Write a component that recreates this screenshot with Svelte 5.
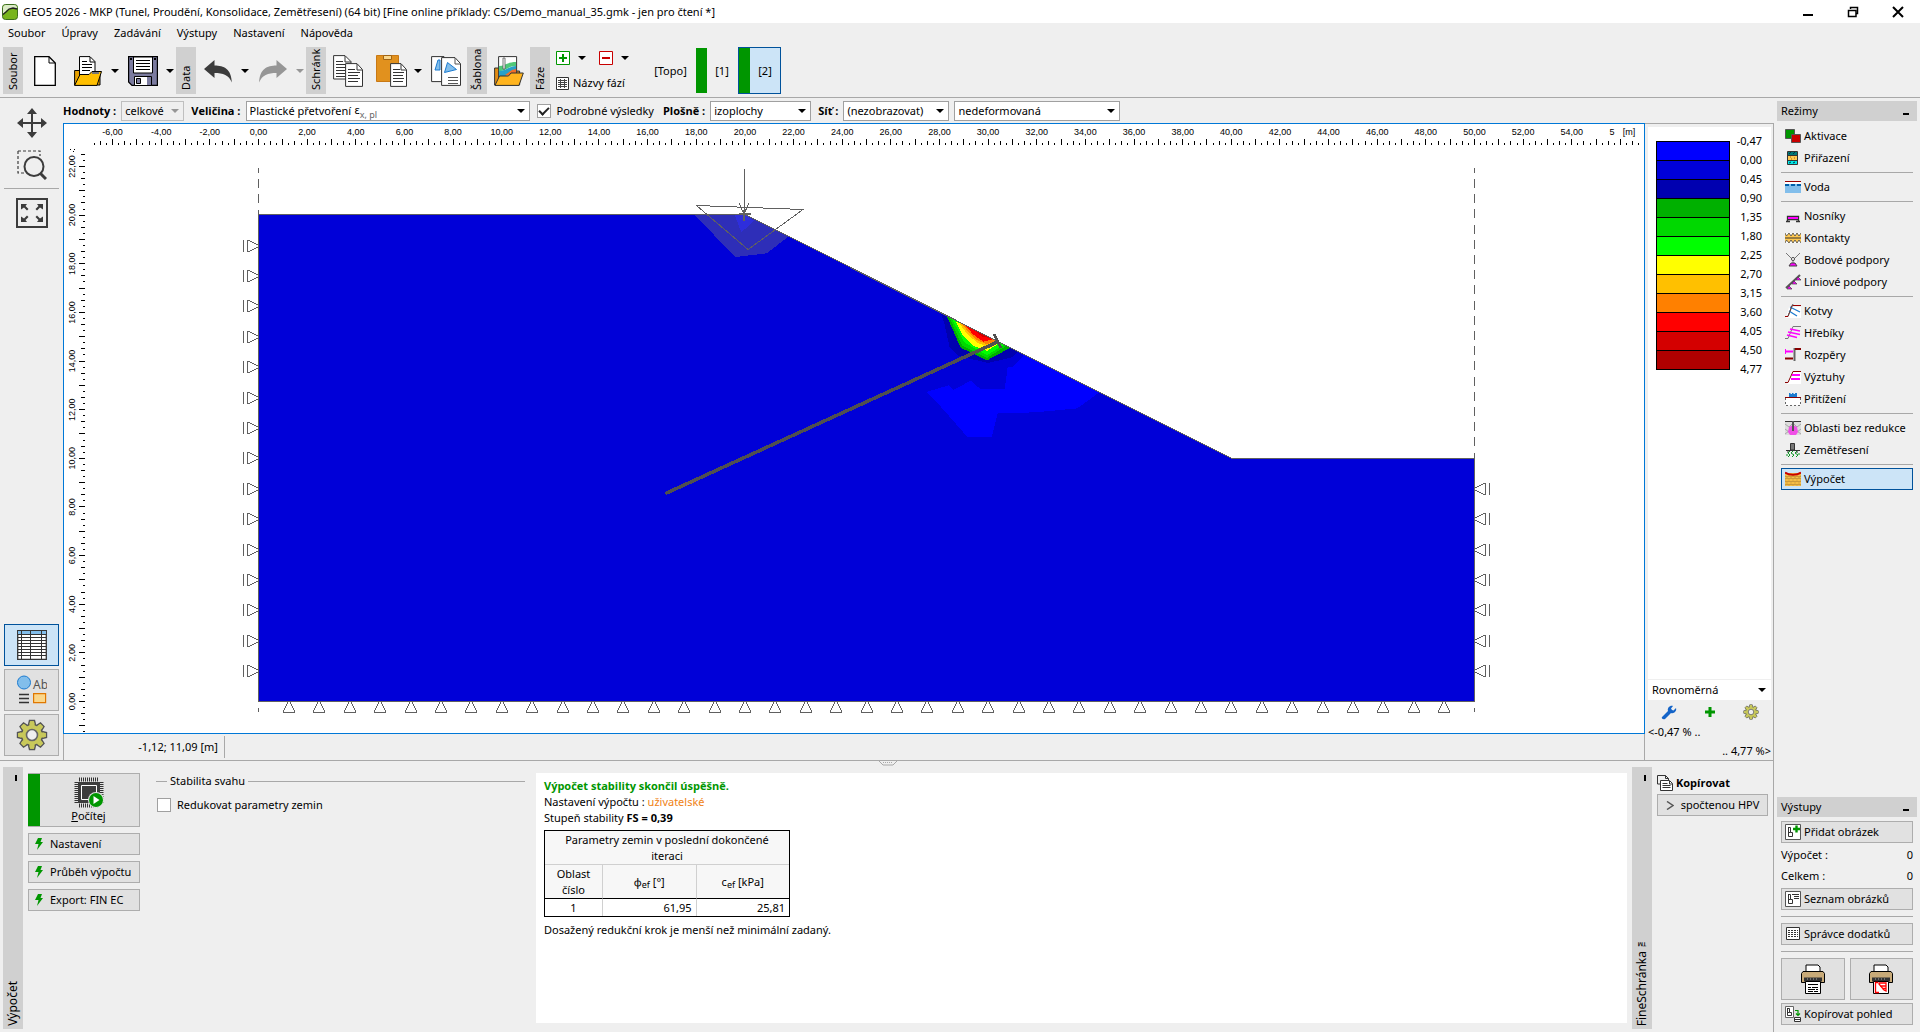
<script>
let detailed = $state(true);
let reduce = $state(false);
let activeMode = $state('Výpočet');
let activeStage = $state(2);

const menu = ['Soubor', 'Úpravy', 'Zadávání', 'Výstupy', 'Nastavení', 'Nápověda'];

const modes = [
     ['Aktivace', 'Přiřazení'],
     ['Voda'],
     ['Nosníky', 'Kontakty', 'Bodové podpory', 'Liniové podpory'],
     ['Kotvy', 'Hřebíky', 'Rozpěry', 'Výztuhy', 'Přitížení'],
     ['Oblasti bez redukce', 'Zemětřesení'],
     ['Výpočet']
];

const scale = ['#0000ff', '#0000d8', '#0000b0', '#00b000', '#00d800', '#00ff00', '#ffff00', '#ffc000', '#ff8000', '#ff0000', '#d40000', '#b00000'];
const levels = ['-0,47', '0,00', '0,45', '0,90', '1,35', '1,80', '2,25', '2,70', '3,15', '3,60', '4,05', '4,50', '4,77'];

// drawing area: metres to pixels
const PX = 24.32;
const toX = (m) => 258.5 + m * PX;
const toY = (m) => 701.5 - m * PX;

function range(from, to, step) {
     const out = [];
     for (let v = from; v <= to + 0.001; v += step) {
          out.push(v);
     }
     return out;
}
function tickLength(m) {
     if (Number.isInteger(m)) return 6;
     return Number.isInteger(m * 2) ? 4 : 2;
}
const format = (m) => m.toFixed(2).replace('.', ',');

const xTicks = range(-6.75, 56.75, 0.25);
const yTicks = range(-1.25, 22.5, 0.25);
const xLabels = range(-6, 54, 2);
const yLabels = range(0, 22, 2);
const supportsLeft = range(1.25, 18.75, 1.25);
const supportsRight = range(1.25, 8.75, 1.25);
const supportsBottom = range(1.25, 48.75, 1.25);
const teeth = [0, 45, 90, 135, 180, 225, 270, 315];
</script>

{#snippet gear(size)}
     <svg width={size} height={size} viewBox="0 0 32 32">
          {#each teeth as angle}
               <path d="M12 8L13.5 1.5h5L20 8" fill="#c8c85a" stroke="#555" stroke-width="1.4" transform="rotate({angle} 16 16)" />
          {/each}
          <circle cx="16" cy="16" r="10.5" fill="#c8c85a" stroke="#555" stroke-width="1.2" />
          {#each teeth as angle}
               <path d="M13 8L14.2 2.2h3.6L19 8z" fill="#c8c85a" transform="rotate({angle} 16 16)" />
          {/each}
          <circle cx="16" cy="16" r="5.5" fill="#efefef" stroke="#666" stroke-width="1.6" />
     </svg>
{/snippet}

{#snippet bolt()}
     <svg class="bolt" width="8" height="12" viewBox="0 0 8 12"><path d="M3 0h4L5.500 4H8L2 12 3.500 6H0z" fill="#009600" /></svg>
{/snippet}

{#snippet printer(red)}
     <svg width="26" height="30" viewBox="0 0 26 30">
          <path d="M6 7V1h12l2 2v4" fill="#fff" stroke="#000" />
          <path d="M3 7.500h20l1.500 2v9h-23v-9z" fill="#c8aa78" stroke="#000" />
          <path d="M4 13.500h18v4H4z" fill="#333" />
          <path d="M7 15h1m2 0h1m2 0h1m2 0h1" stroke="#aaa" />
          <path d="M5.500 17.500h15v12h-15z" fill="#fff" stroke="#000" />
          {#if red}
               <path d="M10 18.500H7.500v10H11M11 19h7v8l-2-1-5-6zM12 22h6m-4 2.500h4" fill="none" stroke="#f00" stroke-width="1.300" />
          {:else}
               <path d="M8 20.500h10M8 23.500h3m1 0h6M8 25.500h7m1 0h2M8 27.500h5m1 0h4" stroke="#000" />
          {/if}
     </svg>
{/snippet}

{#snippet picture(kind)}
     <svg width="16" height="16" viewBox="0 0 16 16">
          {#if kind === 'view'}
               <path d="M.5.500h8v11h-8z" fill="#fff" stroke="#666" />
               <path d="M2.500 2v7.500h4v-3h-2v-4h-2m0 4h2" fill="none" stroke="#333" />
               <path d="M10 4.500h3v5m-2-2 2 2 2-2" fill="none" stroke="#009600" stroke-width="1.200" />
               <path d="M9.500 11.500h6v4h-6zM9 13.500h7" fill="#fff" stroke="#333" />
          {:else if kind === 'table'}
               <path d="M1.500 1.500h13v12h-13z" fill="#fff" stroke="#333" />
               <path d="M3 4.500h10M3 6.500h10M3 8.500h10M3 10.500h10" stroke="#333" stroke-dasharray="2 1" />
          {:else}
               <path d="M.5.500h15v15H.5z" fill="#fff" stroke="#555" />
               <path d="M3.500 3v9.500h4v-4h-2v-5h-2m0 5h2" fill="none" stroke="#333" />
               {#if kind === 'add'}
                    <path d="M8 5h7M11.500 1.500v7" stroke="#009600" stroke-width="2.400" />
               {:else}
                    <path d="M7 3.500h7M9 5.500h5M9 7.500h5" stroke="#333" />
               {/if}
          {/if}
     </svg>
{/snippet}

{#snippet modeIcon(name)}
     <svg width="16" height="16" viewBox="0 0 16 16">
          {#if name === 'Aktivace'}
               <path d="M.5 1.500h9v9h-9z" fill="#009600" stroke="#555" />
               <path d="M6.500 6.500h9v8h-9z" fill="#c80000" stroke="#555" />
          {:else if name === 'Přiřazení'}
               <path d="M2.500 1.500h10v13h-10z" fill="#ffc850" stroke="#333" />
               <path d="M3 2h9v3H3z" fill="#007878" /><path d="M3 11h9v3H3z" fill="#00e6e6" />
               <path d="M3 5.500h9M3 10.500h9" stroke="#333" />
               <path d="M4 4l2-2m2 2 2-2M4 13l2-1m2 1 2-1" stroke="#034" /><path d="M5 7h1m3 1h1M6 9h1" stroke="#a60" />
          {:else if name === 'Voda'}
               <path d="M0 4h16v10H0z" fill="#82beeb" /><path d="M0 3h16v2H0z" fill="#fff" />
               <path d="M0 2.500h16" stroke="#960000" /><path d="M0 6h16" stroke="#005faa" stroke-width="2" stroke-dasharray="4 2" />
          {:else if name === 'Nosníky'}
               <path d="M1 13.500h4M11 13.500h4M2.500 13V8.500h11V13M3 11.500h10" stroke="#333" fill="none" stroke-width="1.300" />
               <path d="M3 9h10v2H3z" fill="#f0f" />
          {:else if name === 'Kontakty'}
               <path d="M0 3h16v10H0z" fill="#ffc850" />
               <path d="M0 3l1.500 3L4 3l2 3 2-3 2 3 2-3 2 3 2-3M0 13l1.500-3L4 13l2-3 2 3 2-3 2 3 2-3 2 3" fill="#fff" stroke="#444" stroke-width=".8" />
               <path d="M0 8h16" stroke="#333" />
          {:else if name === 'Bodové podpory'}
               <path d="M1 1l7 7 7-7M8 8v3" stroke="#777" fill="none" />
               <circle cx="8" cy="7" r="1.600" fill="#eee" stroke="#555" /><path d="M4 14l2-3h4l2 3z" fill="#f0f" stroke="#444" />
          {:else if name === 'Liniové podpory'}
               <path d="M1 14L15 1" stroke="#555" stroke-width="2" />
               <path d="M2 15l2-3 3 3zM7 10l2-3 3 3zM11 6l2-3 3 3z" fill="#f0f" stroke="#444" stroke-width=".7" />
          {:else if name === 'Kotvy'}
               <path d="M4 4h12v11H1z" fill="#fff" /><path d="M0 13.500h3L7 2.500h9" fill="none" stroke="#900" />
               <path d="M5 4l10 5M4 8l8 5" stroke="#1c7bd0" stroke-width="1.300" /><path d="M8 1L3 13" stroke="#555" />
          {:else if name === 'Hřebíky'}
               <path d="M0 13.500h3L8 1.500h8" fill="none" stroke="#777" />
               <path d="M5 4l10 2M3 7l12 2.500M2 10l10 2.500" stroke="#f0f" stroke-width="1.300" />
          {:else if name === 'Rozpěry'}
               <path d="M9.500 1v13" stroke="#666" stroke-width="2" /><path d="M10 2h6M0 11.500h8" stroke="#800" stroke-width="2" />
               <path d="M0 4.500h8" stroke="#f0f" stroke-width="2" /><path d="M.5 2v5" stroke="#f0f" />
          {:else if name === 'Výztuhy'}
               <path d="M7 3h9v12H2z" fill="#fff" /><path d="M0 13.500h3L8 2.500h8" fill="none" stroke="#800" />
               <path d="M7 6h8M6 10h9" stroke="#f0f" stroke-width="1.800" />
          {:else if name === 'Přitížení'}
               <path d="M4 6V2h1.500v1H7V2h1.500v1H10V2h2v4z" fill="#1c7bd0" /><path d="M0 6.500h16" stroke="#800" />
               <path d="M.5 7v7.500h15V7" fill="#fff" stroke="#666" stroke-dasharray="2 2" />
          {:else if name === 'Oblasti bez redukce'}
               <path d="M0 1h16v14H0z" fill="#ddd" /><path d="M0 4l4 3 4-4 4 4 4-3M0 9l4 3 4-3 4 3 4-3M0 14l4-3 4 3 4-3 4 3" fill="none" stroke="#999" stroke-width=".8" />
               <path d="M8 5l4 2 1 5-2 3H5l-2-3 1-5z" fill="#f050e6" /><path d="M0 1.500h16" stroke="#333" /><path d="M8 1v10" stroke="#555" stroke-width="2" />
          {:else if name === 'Zemětřesení'}
               <path d="M5.500 1.500h4V8h-4z" fill="#777" stroke="#333" /><path d="M1 8.500h14M3 8v3m9-3v3" stroke="#333" />
               <path d="M5 9l-2 2 2 2-2 2M8 9l-2 2 3 2-2 2M12 9l-2 2 3 2-2 2M1 13h2m10-1h2" fill="none" stroke="#0a9623" />
          {:else}
               <path d="M0 2h16v13H0z" fill="#f5be46" />
               <path d="M0 5l2 1 2-1 2 1 2-1 2 1 2-1 2 1 2-1M0 8l2-1 2 1 2-1 2 1 2-1 2 1 2-1 2 1M0 10l2 1 2-1 2 1 2-1 2 1 2-1 2 1 2-1M0 14l2-1 2 1 2-1 2 1 2-1 2 1 2-1 2 1" fill="none" stroke="#b08232" stroke-width=".8" />
               <path d="M0 1.500c4 3 12 3 16 0" fill="none" stroke="#c80000" stroke-width="2" />
          {/if}
     </svg>
{/snippet}

<div class="app">
     <header class="titlebar">
          <svg width="16" height="16" viewBox="0 0 16 16">
               <rect x=".5" y=".5" width="15" height="15" rx="3" fill="#78b41e" stroke="#3c6e1e" />
               <path d="M1 10l4-4 3-1 3-1 4 1V4c0-2-1-3-3-3H4C2 1 1 2 1 4z" fill="#dcebc8" />
               <path d="M1 10.500L4 8l3-3 4-1 4 1" fill="none" stroke="#222" stroke-width="1.300" />
          </svg>
          <h1>GEO5 2026 - MKP (Tunel, Proudění, Konsolidace, Zemětřesení) (64 bit) [Fine online příklady: CS/Demo_manual_35.gmk - jen pro čtení *]</h1>
          <div class="window-buttons">
               <button aria-label="Minimalizovat"><svg width="12" height="12" viewBox="0 0 12 12"><path d="M1 9h10" stroke="#000" stroke-width="2" /></svg></button>
               <button aria-label="Obnovit"><svg width="12" height="12" viewBox="0 0 12 12"><path d="M3.500 3V1.500h7v6H9" fill="none" stroke="#000" stroke-width="1.500" /><path d="M1.500 4.500H9v6H1.500z" fill="#fff" stroke="#000" stroke-width="1.500" /></svg></button>
               <button aria-label="Zavřít"><svg width="12" height="12" viewBox="0 0 12 12"><path d="M1 1l10 10M11 1L1 11" stroke="#000" stroke-width="2" /></svg></button>
          </div>
     </header>

     <nav class="menu">
          {#each menu as entry}
               <button>{entry}</button>
          {/each}
     </nav>

     <div class="toolbar">
          <span class="strip">Soubor</span>
          <button class="tool" aria-label="Nový">
               <svg width="22" height="30" viewBox="0 0 22 30"><path d="M.7.700H15L21.300 7v22.300H.7z" fill="#fff" stroke="#000" stroke-width="1.300" /><path d="M15 1v6h6" fill="none" stroke="#000" /></svg>
          </button>
          <button class="tool" aria-label="Otevřít">
               <svg width="28" height="30" viewBox="0 0 28 30">
                    <path d="M.6 29V14.500h5l3 3H26V29z" fill="#e6a000" stroke="#000" />
                    <path d="M5.500 22V.600H16l5 5V22z" fill="#fff" stroke="#000" /><path d="M16 1v5h5M8 5.500h5M8 8.500h10M8 11.500h10M8 14.500h8" fill="none" stroke="#000" />
                    <path d="M.6 29.400L6 18.500h9l3-3h9.500L23 29.400z" fill="#ffbf00" stroke="#000" /><path d="M18 17h7" stroke="#777" stroke-width="2" />
               </svg>
          </button>
          <button class="drop" aria-label="Otevřít – další"></button>
          <button class="tool" aria-label="Uložit">
               <svg width="30" height="30" viewBox="0 0 30 30">
                    <path d="M.6.600h28.800v28.800H4L.6 26z" fill="#7b7b9f" stroke="#000" stroke-width="1.200" />
                    <path d="M5.500 1h19v16h-19z" fill="#fff" stroke="#000" /><path d="M8 4.500h14M8 7.500h14M8 10.500h14M8 13.500h14" stroke="#000" />
                    <path d="M6.500 20.500h17v9h-17z" fill="#fff" stroke="#000" /><path d="M8.500 22.500h4v5h-4z" fill="#7b7b9f" stroke="#000" /><path d="M19 21h4v8h-4z" fill="#7b7b9f" />
                    <path d="M2 3h2m22 0h2" stroke="#000" stroke-width="2" />
               </svg>
          </button>
          <button class="drop" aria-label="Uložit – další"></button>

          <span class="strip">Data</span>
          <button class="tool" aria-label="Zpět"><svg width="28" height="26" viewBox="0 0 28 26"><path d="M0 11L10.500 2v5.500C20 7.500 27.500 11 27.800 24.500 25 17 19 15 10.500 15v5z" fill="#3c3c3c" /></svg></button>
          <button class="drop" aria-label="Zpět – další"></button>
          <button class="tool" aria-label="Znovu"><svg width="28" height="26" viewBox="0 0 28 26"><path d="M28 11L17.500 2v5.500C8 7.500.5 11 .2 24.500 3 17 9 15 17.500 15v5z" fill="#969696" /></svg></button>
          <button class="drop dim" aria-label="Znovu – další"></button>

          <span class="strip">Schránk</span>
          <button class="tool" aria-label="Kopírovat">
               <svg width="30" height="32" viewBox="0 0 30 32">
                    <path d="M.6.600H12l6 6V24H.6z" fill="#fff" stroke="#333" /><path d="M12 1v6h6M3 6.500h7M3 9.500h12M3 12.500h11M3 15.500h9M3 18.500h9M3 21.500h9" fill="none" stroke="#333" />
                    <path d="M12.600 8.600H24l5.500 6v16.800H12.600z" fill="#fff" stroke="#333" /><path d="M24 9v6h5M15 14.500h7M15 17.500h12M15 20.500h10M15 23.500h12M15 26.500h10" fill="none" stroke="#333" />
               </svg>
          </button>
          <button class="tool" aria-label="Vložit">
               <svg width="31" height="32" viewBox="0 0 31 32">
                    <path d="M.5.500h22v26H.5z" fill="#e1911e" stroke="#c87814" /><path d="M7.500.500h8v4h-8z" fill="#fad78c" stroke="#a06414" />
                    <path d="M14.600 8.600H25l5.500 6v16.800H14.600z" fill="#fff" stroke="#333" /><path d="M25 9v6h5M17 14.500h7M17 17.500h11M17 20.500h10M17 23.500h11M17 26.500h10" fill="none" stroke="#333" />
               </svg>
          </button>
          <button class="drop" aria-label="Vložit – další"></button>
          <button class="tool" aria-label="Kopírovat obrázek">
               <svg width="30" height="30" viewBox="0 0 30 30">
                    <path d="M.6.600H13v25H.6z" fill="#fff" stroke="#333" /><path d="M4 14l3-10h2v10z" fill="#82beeb" stroke="#1c7bd0" />
                    <path d="M10.600 1.600H24l5.500 6v21.800H10.600z" fill="#fff" stroke="#333" /><path d="M24 2v6h5M17 21.500h10M17 24.500h10M17 27.500h10" fill="none" stroke="#555" />
                    <path d="M13.500 16.500l3-10 9 7z" fill="#82beeb" stroke="#1c7bd0" />
               </svg>
          </button>

          <span class="strip">Šablona</span>
          <button class="tool" aria-label="Šablona">
               <svg width="30" height="30" viewBox="0 0 30 30">
                    <path d="M.6 29V12h4l2 3h19v14z" fill="#e18c14" stroke="#333" />
                    <path d="M4.600.600h18v22h-18z" fill="#fff" stroke="#333" />
                    <path d="M5 10c6 0 8-4 17-4v4c-8 0-10 5-17 5z" fill="#50c878" /><path d="M5 15c7 0 10-5 17-5v7L5 22z" fill="#28a0c8" /><path d="M11 19l7-5 4-1v8z" fill="#f06e28" />
                    <path d="M9 2h2v11H9z" fill="#fff" stroke="#555" stroke-width=".8" />
                    <path d="M1 29.400L5.500 20h9l2.500-3h12.300L25 29.400z" fill="#ffb41e" stroke="#333" />
               </svg>
          </button>

          <span class="strip">Fáze</span>
          <div class="stages-edit">
               <div class="row">
                    <button class="mini" aria-label="Přidat fázi"><svg width="14" height="14" viewBox="0 0 14 14"><path d="M.5.500h13v13H.5z" fill="#fff" stroke="#009600" /><path d="M3 7h8M7 3v8" stroke="#009600" stroke-width="2" /></svg></button>
                    <button class="drop" aria-label="Přidat fázi – další"></button>
                    <button class="mini" aria-label="Odebrat fázi"><svg width="14" height="14" viewBox="0 0 14 14"><path d="M.5.500h13v13H.5z" fill="#fff" stroke="#c80000" /><path d="M3 7h8" stroke="#c80000" stroke-width="2" /></svg></button>
                    <button class="drop" aria-label="Odebrat fázi – další"></button>
               </div>
               <button class="names">
                    <svg width="13" height="13" viewBox="0 0 13 13"><path d="M.5.500h12v12H.5z" fill="#fff" stroke="#333" /><path d="M2 3.500h9M2 5.500h9M2 7.500h9M2 9.500h9M4.500 2v9M8.500 2v9" stroke="#444" /></svg>
                    Názvy fází
               </button>
          </div>
          <button class="stage topo" onclick={() => activeStage = 0}>[Topo]</button>
          <button class="stage done" class:active={activeStage == 1} onclick={() => activeStage = 1}>[1]</button>
          <button class="stage done" class:active={activeStage == 2} onclick={() => activeStage = 2}>[2]</button>
     </div>

     <div class="workspace">
          <div class="left-area">
               <div class="upper">
                    <aside class="viewtools">
                         <button aria-label="Posun"><svg width="30" height="30" viewBox="0 0 30 30"><path d="M4 15h22M15 4v22" stroke="#3c3c3c" stroke-width="2" /><path d="M15 0l5 6H10zM15 30l5-6H10zM0 15l6-5v10zM30 15l-6-5v10z" fill="#3c3c3c" /></svg></button>
                         <button aria-label="Lupa"><svg width="30" height="30" viewBox="0 0 30 30"><path d="M1 1h22v5M1 1v22h6" fill="none" stroke="#3c3c3c" stroke-dasharray="3 2" stroke-width="1.200" /><circle cx="17" cy="16.500" r="9.500" fill="none" stroke="#3c3c3c" stroke-width="2" /><path d="M23 23l6 6" stroke="#3c3c3c" stroke-width="3" /></svg></button>
                         <hr>
                         <button aria-label="Zobrazit vše"><svg width="32" height="30" viewBox="0 0 32 30"><path d="M1 1h30v28H1z" fill="none" stroke="#3c3c3c" stroke-width="2" /><path d="M5 6h6L9.500 8l3 3L11 12.500l-3-3-3 2zM27 6h-6l1.500 2-3 3 1.500 1.500 3-3 3 2zM5 24h6l-1.500-2 3-3-1.500-1.500-3 3-3-2zM27 24h-6l1.500-2-3-3 1.500-1.500 3 3 3-2z" fill="#3c3c3c" /></svg></button>
                         <div class="panel-switch">
                              <button class="box active" aria-label="Tabulky">
                                   <svg width="30" height="30" viewBox="0 0 30 30"><path d="M.7.700h28.600v28.600H.7z" fill="#fff" stroke="#333" stroke-width="1.300" /><path d="M1 1h28v3H1z" fill="#82beeb" /><path d="M1 4.500h28M1 7.500h28M1 10.500h28M1 13.500h28M1 16.500h28M1 19.500h28M1 22.500h28M1 25.500h28M4.500 1v28M13.500 1v28M24.500 1v28" stroke="#333" /></svg>
                              </button>
                              <button class="box" aria-label="Popisy">
                                   <svg width="30" height="30" viewBox="0 0 30 30"><circle cx="7" cy="7.500" r="6.500" fill="#82beeb" stroke="#1c7bd0" /><text class="ab" x="16" y="14">Ab</text><path d="M2 19.500h10M2 23.500h10M2 27.500h10" stroke="#333" stroke-width="1.600" /><path d="M16.600 18.600h12v9h-12z" fill="#fad78c" stroke="#e17800" stroke-width="1.200" /></svg>
                              </button>
                              <button class="box" aria-label="Nastavení kreslení">{@render gear(32)}</button>
                         </div>
                    </aside>

                    <main>
                         <div class="filters">
                              <label for="values">Hodnoty :</label>
                              <span class="combo values"><select id="values" disabled><option>celkové</option></select></span>
                              <label for="quantity">Veličina :</label>
                              <span class="combo quantity">
                                   <select id="quantity"><option>Plastické přetvoření</option></select>
                                   <span class="formula"><span>ε</span><sub>x, pl</sub></span>
                              </span>
                              <label class="check"><input type="checkbox" bind:checked={detailed}>Podrobné výsledky</label>
                              <label for="area">Plošně :</label>
                              <span class="combo area"><select id="area"><option>izoplochy</option></select></span>
                              <label for="mesh">Síť :</label>
                              <span class="combo mesh"><select id="mesh"><option>(nezobrazovat)</option></select></span>
                              <span class="combo shape"><select aria-label="Tvar sítě"><option>nedeformovaná</option></select></span>
                         </div>

                         <div class="view">
                              <div class="plot">
                                   <div class="canvas">
                                        <svg viewBox="64 124 1580 609" shape-rendering="crispEdges">
                                             <g stroke="#000">
                                                  {#each xTicks as m}
                                                       <line x1={toX(m)} x2={toX(m)} y1={145 - tickLength(m)} y2="145" />
                                                  {/each}
                                                  {#each yTicks as m}
                                                       <line x1={85 - tickLength(m)} x2="85" y1={toY(m)} y2={toY(m)} />
                                                  {/each}
                                             </g>
                                             <g class="ruler">
                                                  {#each xLabels as m}
                                                       <text x={toX(m)} y="135">{format(m)}</text>
                                                  {/each}
                                                  <text x="1612" y="135">5</text>
                                                  <text x="1629" y="135">[m]</text>
                                                  {#each yLabels as m}
                                                       <text transform="translate(75 {toY(m)}) rotate(-90)">{format(m)}</text>
                                                  {/each}
                                             </g>
                                             <path d="M70 149.500h1M74 149.500h1M73 151h1" stroke="#000" />

                                             <!-- soil body -->
                                             <polygon points="258.5,214.5 744.9,214.5 1231.3,458.3 1474.5,458.3 1474.5,701.5 258.5,701.5" fill="#0000d8" />

                                             <!-- isosurfaces, in thirds of a pixel -->
                                             <g transform="translate(640 160) scale(.33333)">
                                                  <polygon points="162,164 314,164 445,230 380,280 287,291" fill="#2e2eb8" />
                                                  <polygon points="284,164 314,164 343,182 304,217" fill="#2e2edc" />
                                                  <polygon points="903,462 913,490 929,562 955,588 1045,609 1115,592 1135,574" fill="#0000b0" />
                                                  <polygon points="1152,585 1118,620 1103,622 1094,687 1020,686 992,662 940,690 925,676 860,696 905,743 982,831 1055,831 1073,760 1145,759 1220,754 1312,745 1377,698" fill="#0000ff" />
                                                  <polygon points="920,468 962,563 1041,601 1112,563" fill="#00b000" />
                                                  <polygon points="928,472 966,556 1041,594 1098,558" fill="#00d800" />
                                                  <polygon points="936,477 974,548 1041,586 1092,554" fill="#00ff00" />
                                                  <polygon points="946,483 968,525 1000,557 1041,573 1080,548" fill="#ffff00" />
                                                  <polygon points="957,488 980,520 1010,547 1041,560 1075,546" fill="#ffc000" />
                                                  <polygon points="967,493 987,518 1012,541 1040,552 1072,545" fill="#ff8000" />
                                                  <polygon points="976,497 1000,524 1030,545 1058,538" fill="#ff0000" />
                                                  <polygon points="998,508 1027,530 1050,534" fill="#d40000" />
                                             </g>

                                             <polyline points="258.5,701.5 258.5,214.5 744.9,214.5 1231.3,458.3 1474.5,458.3 1474.5,701.5 258.5,701.5" class="line" />
                                             <g class="line">
                                                  <path d="M258.500 168v5M258.500 179v9M258.500 194v9M258.500 210v5M258.500 708v4M1474.500 708v4" />
                                                  <path d="M1474.500 168v5" />
                                                  <path d="M1474.500 179V458" stroke-dasharray="9 6.200" />
                                                  {#each supportsLeft as m}
                                                       <path transform="translate(258 {Math.round(toY(m))})" d="M-14.500-6V6M-10.500-6V6M-10-6L0-1M-10 6L0 1" />
                                                  {/each}
                                                  {#each supportsRight as m}
                                                       <path transform="translate(1475 {Math.round(toY(m))})" d="M14.500-6V6M10.500-6V6M10-6L0-1M10 6L0 1" />
                                                  {/each}
                                                  {#each supportsBottom as m}
                                                       <path transform="translate({Math.round(toX(m))} 702)" d="M-6 10.500H6M-6 10L-1 0M6 10L1 0" />
                                                  {/each}
                                                  <path d="M744.500 169V214M739 203l5 11 5-11M696.500 205.500L803 209.500 748 249.500z" />
                                                  <path d="M744 210v11M739 214h12" stroke-width="2" />
                                             </g>
                                             <path d="M665.500 493.500L997.500 342" stroke="#505050" stroke-width="3.500" />
                                             <path d="M994 334l7 14" stroke="#505050" stroke-width="3" />
                                        </svg>
                                   </div>
                                   <div class="status"><span>-1,12; 11,09 [m]</span></div>
                              </div>

                              <div class="legend">
                                   <div class="scale">
                                        <div class="bars">
                                             {#each scale as color}
                                                  <i style:background={color}></i>
                                             {/each}
                                        </div>
                                        <div class="levels">
                                             {#each levels as level}
                                                  <span>{level}</span>
                                             {/each}
                                        </div>
                                   </div>
                                   <span class="combo flat"><select aria-label="Stupnice"><option>Rovnoměrná</option></select></span>
                                   <div class="legend-tools">
                                        <button aria-label="Upravit"><svg width="16" height="16" viewBox="0 0 16 16"><path d="M1 13l6-6c-1-3 2-6 5-5L10 4.500l1 1.500 1.500.500L15 4c1 3-2 6-5 5l-6 6c-2 1-4-1-3-2z" fill="#1464c8" /></svg></button>
                                        <button aria-label="Přidat"><svg width="16" height="16" viewBox="0 0 16 16"><path d="M3 8h10M8 3v10" stroke="#009600" stroke-width="3" /></svg></button>
                                        <button aria-label="Nastavení stupnice">{@render gear(16)}</button>
                                   </div>
                                   <div class="limits"><span>&lt;-0,47 % ..</span><span class="max">.. 4,77 %&gt;</span></div>
                              </div>
                         </div>
                    </main>
               </div>

               <div class="lower">
                    <svg class="grip" width="18" height="5" viewBox="0 0 18 5"><path d="M0 0l4 4h10l4-4" fill="#efefef" stroke="#a8a8a8" /><path d="M4 1.500h10" stroke="#a8a8a8" stroke-dasharray="1 1" /></svg>
                    <div class="side-strip"><button aria-label="Sbalit"></button><span>Výpočet</span></div>
                    <div class="actions">
                         <button class="box run">
                              <span class="run-body">
                                   <svg width="30" height="31" viewBox="0 0 30 31">
                                        <path d="M5 2.500h20M5 28.500h20" stroke="#333" stroke-width="4" stroke-dasharray="1 1" /><path d="M2.500 5v21M27.500 5v21" stroke="#333" stroke-width="4" stroke-dasharray="1 1" />
                                        <path d="M4 5h22v21H4z" fill="#3c3c3c" /><path d="M7.500 8.500h15v14h-15z" fill="none" stroke="#fff" />
                                        <circle cx="22" cy="23" r="8" fill="#e1e1e1" /><circle cx="22" cy="23" r="7" fill="#009600" /><path d="M19.500 19v8l6-4z" fill="#fff" />
                                   </svg>
                                   <span><u>P</u>očítej</span>
                              </span>
                         </button>
                         <button class="box quick">{@render bolt()}Nastavení</button>
                         <button class="box quick">{@render bolt()}Průběh výpočtu</button>
                         <button class="box quick">{@render bolt()}Export: FIN EC</button>
                    </div>
                    <fieldset>
                         <legend>Stabilita svahu</legend>
                         <label class="check"><input type="checkbox" bind:checked={reduce}>Redukovat parametry zemin</label>
                    </fieldset>
                    <section class="results">
                         <p><b class="ok">Výpočet stability skončil úspěšně.</b></p>
                         <p>Nastavení výpočtu : <span class="custom">uživatelské</span></p>
                         <p>Stupeň stability <b>FS = 0,39</b></p>
                         <table>
                              <colgroup><col class="number"><col><col></colgroup>
                              <thead>
                                   <tr><th colspan="3">Parametry zemin v poslední dokončené iteraci</th></tr>
                                   <tr><th>Oblast číslo</th><th>φ<sub>ef</sub> [°]</th><th>c<sub>ef</sub> [kPa]</th></tr>
                              </thead>
                              <tbody>
                                   <tr><td class="first">1</td><td>61,95</td><td>25,81</td></tr>
                              </tbody>
                         </table>
                         <p>Dosažený redukční krok je menší než minimální zadaný.</p>
                    </section>
                    <div class="side-strip"><button aria-label="Sbalit"></button><span>FineSchránka™</span></div>
                    <div class="clipboard">
                         <h2><svg width="16" height="16" viewBox="0 0 16 16"><path d="M.5 9V.500h8l3 3V5M8.500.500v3h3M.5 9H3" fill="none" stroke="#333" /><path d="M3.500 5.500h9l3 3v7h-12z" fill="#fff" stroke="#333" /><path d="M12.500 6v3h3M5.500 8.500h5M5.500 10.500h8M5.500 12.500h8" fill="none" stroke="#333" /></svg>Kopírovat</h2>
                         <button class="box"><svg width="8" height="9" viewBox="0 0 8 9"><path d="M1 .500l6 4-6 4" fill="none" stroke="#555" stroke-width="1.500" /></svg>spočtenou HPV</button>
                    </div>
               </div>
          </div>

          <aside class="sidebar">
               <h2>Režimy<button aria-label="Sbalit Režimy"></button></h2>
               <div class="modes">
                    {#each modes as group, index}
                         {#if index > 0}<hr>{/if}
                         {#each group as mode}
                              <button class="mode" class:active={activeMode == mode} onclick={() => activeMode = mode}>{@render modeIcon(mode)}{mode}</button>
                         {/each}
                    {/each}
               </div>
               <h2>Výstupy<button aria-label="Sbalit Výstupy"></button></h2>
               <div class="outputs">
                    <button class="box">{@render picture('add')}Přidat obrázek</button>
                    <div class="count"><span>Výpočet :</span><span>0</span></div>
                    <div class="count"><span>Celkem :</span><span>0</span></div>
                    <button class="box">{@render picture('list')}Seznam obrázků</button>
                    <hr>
                    <button class="box">{@render picture('table')}Správce dodatků</button>
                    <hr>
                    <div class="printers">
                         <button class="box" aria-label="Tisk protokolu">{@render printer(false)}</button>
                         <button class="box" aria-label="Tisk obrázku">{@render printer(true)}</button>
                    </div>
                    <button class="box">{@render picture('view')}Kopírovat pohled</button>
               </div>
          </aside>
     </div>
</div>

<style>
     :global(body) {
          margin: 0;
     }
     .app {
          display: flex;
          flex-direction: column;
          height: 100vh;
          min-height: 800px;
          background: #efefef;
          color: #000;
          font-family: "Noto Sans", "Open Sans", sans-serif;
          font-size: 11px;
          line-height: 16px;
     }
     .app * {
          box-sizing: border-box;
     }
     svg {
          display: block;
          flex-shrink: 0;
     }
     button, select, input {
          font: inherit;
          color: inherit;
          margin: 0;
          padding: 0;
          border: 0;
          background: none;
          border-radius: 0;
     }
     h1, h2, p {
          margin: 0;
          font-size: inherit;
          font-weight: normal;
     }
     hr {
          width: 100%;
          height: 1px;
          margin: 3px 0;
          border: 0;
          background: #a8a8a8;
     }
     b, .filters label, .clipboard h2 {
          font-family: "Open Sans", sans-serif;
          font-weight: bold;
     }
     .box {
          display: flex;
          align-items: center;
          height: 22px;
          border: 1px solid #adadad;
          background: #e1e1e1;
          white-space: nowrap;
     }
     .box.active, .mode.active, .stage.active {
          border: 1px solid #00529b;
          background: #cce4f7;
     }
     .titlebar {
          display: flex;
          align-items: center;
          height: 23px;
          padding-left: 2px;
          gap: 5px;
          background: #fff;
     }
     .titlebar h1 {
          flex: 1;
     }
     .window-buttons {
          display: flex;
     }
     .window-buttons button {
          display: grid;
          place-items: center;
          width: 45px;
          height: 23px;
     }
     .menu {
          display: flex;
          align-items: start;
          height: 21px;
          gap: 16px;
          padding-left: 8px;
     }
     .menu button {
          line-height: 20px;
     }
     .toolbar {
          display: flex;
          height: 54px;
          padding: 3px 0 3px 3px;
          border-bottom: 1px solid #a8a8a8;
     }
     .strip {
          width: 20px;
          padding-top: 4px;
          background: #d0d0d0;
          writing-mode: vertical-rl;
          transform: rotate(180deg);
          line-height: 20px;
          overflow: hidden;
     }
     .tool {
          display: grid;
          place-items: center;
          width: 42px;
          margin-left: 1px;
     }
     .drop {
          display: grid;
          place-items: center;
          width: 12px;
     }
     .drop::after, .combo::after {
          content: "";
          border: 4px solid transparent;
          border-top: 4px solid #000;
          border-bottom: 0;
     }
     .drop.dim::after {
          border-top-color: #969696;
     }
     .stages-edit {
          width: 96px;
          padding: 4px 0 0 6px;
     }
     .row {
          display: flex;
          height: 24px;
          align-items: start;
     }
     .row .drop {
          height: 14px;
          margin: 0 11px 0 6px;
     }
     .mini {
          height: 14px;
     }
     .names {
          display: flex;
          align-items: center;
          gap: 4px;
          white-space: nowrap;
     }
     .stage {
          display: grid;
          place-items: center;
          width: 43px;
          border: 1px solid transparent;
     }
     .stage.topo {
          width: 49px;
     }
     .stage.done {
          padding-left: 11px;
          background: linear-gradient(#009600, #009600) 0 0 / 11px 100% no-repeat;
     }
     .stage.active {
          background: linear-gradient(#009600, #009600) 0 0 / 11px 100% no-repeat #cce4f7;
     }
     .workspace {
          display: flex;
          flex: 1;
          min-height: 0;
     }
     .left-area {
          display: flex;
          flex-direction: column;
          flex: 1;
          min-width: 0;
     }
     .upper {
          display: flex;
          flex: 1;
          min-height: 0;
     }
     .viewtools {
          display: flex;
          flex-direction: column;
          width: 63px;
          padding: 10px 4px 4px;
          align-items: center;
          gap: 12px;
     }
     .viewtools hr {
          margin: -4px 0 -3px;
     }
     .panel-switch {
          display: flex;
          flex-direction: column;
          gap: 3px;
          width: 100%;
          margin-top: auto;
     }
     .panel-switch .box {
          height: 42px;
          justify-content: center;
     }
     .ab {
          font-size: 12px;
          fill: #555;
     }
     main {
          display: flex;
          flex-direction: column;
          flex: 1;
          min-width: 0;
     }
     .filters {
          display: flex;
          height: 25px;
          align-items: center;
          gap: 5px;
     }
     .filters label {
          white-space: nowrap;
     }
     .filters .combo + label {
          margin-left: 2px;
     }
     .filters label.check {
          font-family: "Noto Sans", sans-serif;
          font-weight: normal;
          margin-right: 4px;
     }
     .combo {
          position: relative;
          display: flex;
          height: 20px;
     }
     .combo::after {
          position: absolute;
          right: 5px;
          top: 8px;
          pointer-events: none;
     }
     .combo select {
          appearance: none;
          width: 100%;
          height: 20px;
          padding: 0 14px 0 3px;
          border: 1px solid #a0a0a0;
          background: #fff;
     }
     .combo select:disabled {
          border-color: #bfbfbf;
          background: #efefef;
          opacity: 1;
     }
     .combo.values {
          width: 63px;
     }
     .combo.values::after {
          border-top-color: #969696;
     }
     .combo.quantity {
          width: 284px;
     }
     .combo.area {
          width: 101px;
     }
     .combo.mesh {
          width: 106px;
     }
     .combo.shape {
          width: 166px;
     }
     .formula {
          position: absolute;
          left: 109px;
          top: 1px;
          pointer-events: none;
     }
     .formula sub {
          color: #666;
          vertical-align: -4px;
     }
     sub {
          font-size: 9px;
          line-height: 0;
          vertical-align: -2px;
     }
     .check {
          display: flex;
          align-items: center;
          gap: 6px;
     }
     .check input {
          appearance: none;
          display: grid;
          place-items: center;
          width: 14px;
          height: 14px;
          border: 1px solid #a0a0a0;
          background: #fff;
     }
     .check input:checked::after {
          content: "";
          width: 8px;
          height: 4px;
          border: solid #222;
          border-width: 0 0 2px 2px;
          transform: rotate(-45deg);
          margin-bottom: 2px;
     }
     .view {
          display: flex;
          flex: 1;
          min-height: 0;
     }
     .plot {
          display: flex;
          flex-direction: column;
          flex: 1;
          min-width: 0;
     }
     .canvas {
          display: flex;
          flex: 1;
          min-height: 0;
          border: 1px solid #0078d7;
          background: #fff;
     }
     .canvas svg {
          flex: 1;
          min-width: 0;
     }
     .ruler text {
          font-family: "Liberation Sans", sans-serif;
          font-size: 9px;
          text-anchor: middle;
     }
     .line {
          fill: none;
          stroke: #606060;
     }
     .status {
          height: 26px;
          padding: 2px 0;
          border: solid #a8a8a8;
          border-width: 0 1px;
     }
     .status span {
          display: block;
          width: 161px;
          padding-right: 6px;
          border-right: 1px solid #a8a8a8;
          text-align: right;
          line-height: 22px;
     }
     .legend {
          display: flex;
          flex-direction: column;
          width: 129px;
          padding: 3px 2px 0 3px;
          border: solid #a8a8a8;
          border-width: 1px 1px 0 0;
     }
     .scale {
          display: flex;
          flex: 1;
          align-items: start;
          padding: 14px 9px 0 8px;
          margin-bottom: 1px;
          background: #fff;
     }
     .bars {
          width: 74px;
          border: 1px solid #000;
          border-bottom: 0;
     }
     .bars i {
          display: block;
          height: 19px;
          border-bottom: 1px solid #000;
     }
     .levels {
          flex: 1;
          margin-top: -10px;
          text-align: right;
     }
     .levels span {
          display: block;
          line-height: 19px;
     }
     .combo.flat select {
          border-color: #fff;
     }
     .legend-tools {
          display: flex;
          justify-content: space-between;
          padding: 4px 12px 2px 13px;
     }
     .limits {
          display: flex;
          flex-direction: column;
          line-height: 19px;
     }
     .limits .max {
          text-align: right;
     }
     .lower {
          position: relative;
          display: flex;
          min-height: 272px;
          padding: 6px 0 3px 3px;
          border: solid #a8a8a8;
          border-width: 1px 1px 0 0;
     }
     .grip {
          position: absolute;
          left: 50%;
          top: 0;
          margin-left: -8px;
     }
     .side-strip {
          display: flex;
          flex-direction: column;
          justify-content: space-between;
          align-items: center;
          width: 20px;
          padding: 8px 0 3px;
          background: #d0d0d0;
          font-size: 12px;
     }
     .side-strip button {
          width: 2px;
          height: 6px;
          margin-left: 6px;
          background: #000;
     }
     .side-strip span {
          writing-mode: vertical-rl;
          transform: rotate(180deg);
     }
     .actions {
          display: flex;
          flex-direction: column;
          gap: 6px;
          width: 112px;
          margin: 6px 0 0 5px;
     }
     .run {
          height: 54px;
          border-left: 0;
          background: linear-gradient(#009600, #009600) 0 0 / 12px 100% no-repeat #e1e1e1;
     }
     .run-body {
          display: flex;
          flex-direction: column;
          align-items: center;
          flex: 1;
          padding-left: 10px;
     }
     .quick {
          padding-left: 6px;
          gap: 7px;
     }
     fieldset {
          width: 369px;
          height: 60px;
          margin: 6px 0 0 16px;
          padding: 8px 1px;
          border: 0 solid #a8a8a8;
          border-top-width: 1px;
     }
     fieldset legend {
          margin-left: 10px;
          padding: 0 3px;
     }
     .results {
          flex: 1;
          margin: 6px 5px 6px 11px;
          padding: 5px 8px;
          background: #fff;
     }
     .ok {
          color: #009600;
     }
     .custom {
          color: #f08214;
     }
     table {
          width: 246px;
          margin: 4px 0 5px;
          border: 1px solid #000;
          border-spacing: 0;
          table-layout: fixed;
     }
     .number {
          width: 57px;
     }
     th {
          padding: 1px 8px 0;
          border-bottom: 1px solid #d0d0d0;
          background: #f7f7f7;
          font-weight: normal;
     }
     tr + tr th {
          border-bottom-color: #000;
     }
     th + th, td + td {
          border-left: 1px solid #d0d0d0;
     }
     td {
          padding: 1px 4px 0;
          text-align: right;
     }
     td.first {
          text-align: center;
     }
     .clipboard {
          width: 121px;
          padding: 4px 5px 0;
     }
     .clipboard h2 {
          display: flex;
          align-items: center;
          height: 23px;
          gap: 3px;
     }
     .clipboard .box {
          width: 111px;
          gap: 7px;
          justify-content: center;
     }
     .sidebar {
          display: flex;
          flex-direction: column;
          width: 146px;
          padding: 3px 3px 7px;
     }
     .sidebar h2 {
          display: flex;
          justify-content: space-between;
          height: 20px;
          padding: 2px 8px 0 4px;
          background: #d0d0d0;
     }
     .sidebar h2 button {
          width: 6px;
          height: 2px;
          margin-top: 10px;
          background: #000;
     }
     .modes, .outputs {
          display: flex;
          flex-direction: column;
          padding: 4px 4px 0;
     }
     .modes {
          flex: 1;
     }
     .mode, .outputs > .box {
          display: flex;
          align-items: center;
          height: 22px;
          padding-left: 3px;
          gap: 3px;
          border: 1px solid transparent;
          white-space: nowrap;
     }
     .outputs > .box {
          border-color: #adadad;
     }
     .outputs hr {
          margin: 6px 0;
     }
     .count {
          display: flex;
          justify-content: space-between;
          height: 21px;
          line-height: 24px;
     }
     .count + .box {
          margin-top: 3px;
     }
     .printers {
          display: flex;
          gap: 5px;
          margin-bottom: 3px;
     }
     .printers .box {
          flex: 1;
          height: 42px;
          justify-content: center;
     }
</style>
